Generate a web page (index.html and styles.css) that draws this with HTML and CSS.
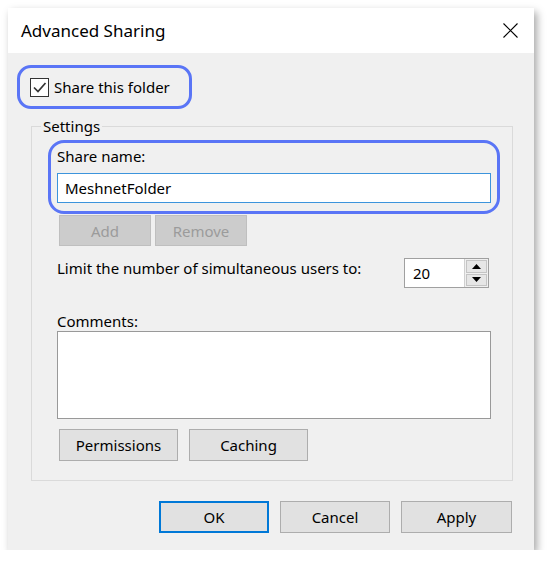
FILE: index.html
```html
<!DOCTYPE html>
<html>
<head>
<meta charset="utf-8">
<link rel="stylesheet" href="styles.css">
</head>
<body>
<div class="dialog">
  <div class="titlebar">
    <span class="title">Advanced Sharing</span>
    <svg class="close" width="15" height="15" viewBox="0 0 15 15"><path d="M0.5 0.5 L14.5 14.5 M14.5 0.5 L0.5 14.5" stroke="#000" stroke-width="1.1" fill="none"/></svg>
  </div>
  <div class="body">
    <div class="hl hl-check">
      <span class="checkbox"><svg width="17" height="17" viewBox="0 0 17 17"><path d="M3 8.5 L7 12.5 L14.5 4" stroke="#333" stroke-width="1.7" fill="none"/></svg></span>
      <span class="check-label">Share this folder</span>
    </div>
    <fieldset class="group">
      <legend class="legend">Settings</legend>
      <div class="hl hl-share">
        <div class="label">Share name:</div>
        <div class="textbox focus">MeshnetFolder</div>
      </div>
      <div class="btn-row first">
        <span class="btn disabled w92">Add</span>
        <span class="btn disabled w92">Remove</span>
      </div>
      <div class="limit-row">
        <span class="limit-text">Limit the number of simultaneous users to:</span>
        <div class="spin">
          <span class="spin-value">20</span>
          <div class="spin-btns">
            <span class="spin-btn"><svg width="9" height="5" viewBox="0 0 9 5"><path d="M4.5 0 L9 5 L0 5 Z" fill="#000"/></svg></span>
            <span class="spin-btn"><svg width="9" height="5" viewBox="0 0 9 5"><path d="M0 0 L9 0 L4.5 5 Z" fill="#000"/></svg></span>
          </div>
        </div>
      </div>
      <div class="label comments-label">Comments:</div>
      <div class="textarea"></div>
      <div class="btn-row second">
        <span class="btn w119">Permissions</span>
        <span class="btn w119">Caching</span>
      </div>
    </fieldset>
    <div class="footer">
      <span class="btn default w110">OK</span>
      <span class="btn w110">Cancel</span>
      <span class="btn w111">Apply</span>
    </div>
  </div>
</div>
</body>
</html>
```
FILE: styles.css
```css
* { box-sizing: border-box; }
body {
  margin: 0;
  background: #fff;
  font-family: "Noto Sans", "Open Sans", sans-serif;
  font-size: 15px;
  color: #000;
}
.dialog {
  margin: 8px 0 0 8px;
  width: 526px;
  height: 542px;
  background: #f0f0f0;
  box-shadow: 3px 4px 8px rgba(0, 0, 0, 0.35);
  display: flex;
  flex-direction: column;
}
.titlebar {
  height: 45px;
  background: #fff;
  display: flex;
  align-items: center;
  justify-content: space-between;
  padding: 0 16px 0 13px;
}
.title { font-size: 17px; }
.close { display: block; }
.body { display: flex; flex-direction: column; }
.hl {
  border: 3px solid #5a75f6;
  border-radius: 14px;
}
.hl-check {
  margin: 12px 0 0 9px;
  width: 175px;
  height: 44px;
  display: flex;
  align-items: center;
  padding-left: 10px;
  gap: 5px;
}
.checkbox {
  width: 19px;
  height: 19px;
  border: 1px solid #333;
  background: #fff;
  display: flex;
  align-items: center;
  justify-content: center;
}
.checkbox svg { display: block; }
.group {
  margin: 7px 0 0 23px;
  width: 482px;
  border: 1px solid #dadada;
  padding: 0 0 19px 0;
  min-width: 0;
}
.legend {
  margin-left: 9px;
  padding: 0 2px;
  line-height: 20px;
}
.hl-share {
  margin: 4px 12px 0 16px;
  padding: 0 6px 8px 6px;
  border-radius: 16px;
}
.label { line-height: 26px; }
.textbox {
  margin-top: 4px;
  height: 30px;
  background: #fff;
  border: 1px solid #7a7a7a;
  padding-left: 7px;
  line-height: 28px;
}
.textbox.focus { border-color: #3c94dc; }
.btn-row { display: flex; margin-left: 27px; }
.btn-row.first { margin-top: 1px; gap: 4px; }
.btn-row.second { margin-top: 10px; gap: 11px; }
.btn {
  height: 31px;
  display: flex;
  align-items: center;
  justify-content: center;
  background: #e1e1e1;
  border: 1px solid #adadad;
}
.btn.disabled { background: #cccccc; border-color: #bfbfbf; color: #9b9b9b; }
.btn.default { border: 2px solid #0078d7; }
.w92 { width: 92px; }
.w110 { width: 110px; }
.w111 { width: 111px; }
.w119 { width: 119px; height: 32px; }
.limit-row {
  margin: 12px 23px 0 25px;
  display: flex;
  align-items: flex-start;
  justify-content: space-between;
}
.limit-text { line-height: 20px; }
.spin {
  width: 85px;
  height: 30px;
  background: #fff;
  border: 1px solid #a0a0a0;
  display: flex;
  align-items: stretch;
}
.spin-value { flex: 1; padding-left: 8px; line-height: 28px; }
.spin-btns {
  width: 24px;
  display: flex;
  flex-direction: column;
  padding: 1px;
  gap: 1px;
  background: #f0f0f0;
  border-left: 1px solid #d0d0d0;
}
.spin-btn {
  flex: 1;
  display: flex;
  align-items: center;
  justify-content: center;
  background: #e6e6e6;
  border: 1px solid #c4c4c4;
}
.spin-btn svg { display: block; }
.comments-label { margin: 23px 0 0 25px; line-height: 20px; }
.textarea {
  margin-left: 25px;
  width: 434px;
  height: 88px;
  background: #fff;
  border: 1px solid #999;
}
.footer {
  display: flex;
  justify-content: flex-end;
  gap: 11px;
  margin: 20px 22px 0 0;
}
.footer .btn { height: 32px; }
```
